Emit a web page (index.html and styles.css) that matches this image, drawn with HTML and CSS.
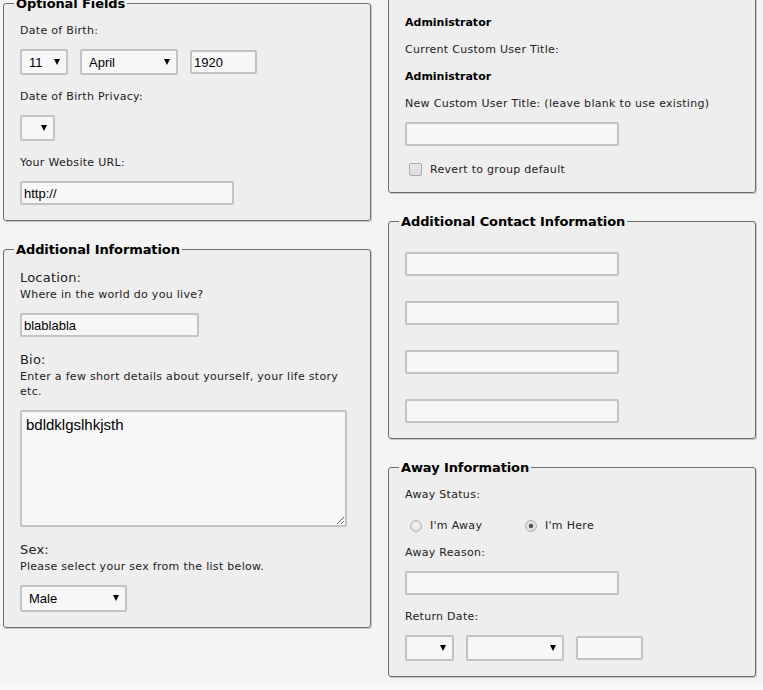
FILE: index.html
```html
<!DOCTYPE html>
<html>
<head>
<meta charset="utf-8">
<link rel="stylesheet" href="styles.css">
</head>
<body>
<div class="page">
  <div class="col col-left">
    <fieldset class="box">
      <legend>Optional Fields</legend>
      <div class="label">Date of Birth:</div>
      <div class="controls">
        <span class="sel"><select class="s-day"><option>11</option></select></span>
        <span class="sel"><select class="s-month"><option>April</option></select></span>
        <input class="txt t-year" type="text" value="1920">
      </div>
      <div class="label">Date of Birth Privacy:</div>
      <div class="controls">
        <span class="sel"><select class="s-priv"><option></option></select></span>
      </div>
      <div class="label">Your Website URL:</div>
      <div class="controls last">
        <input class="txt t-wide" type="text" value="http://">
      </div>
    </fieldset>

    <fieldset class="box box-gap">
      <legend>Additional Information</legend>
      <div class="label-group">
        <div class="title">Location:</div>
        <div class="desc">Where in the world do you live?</div>
      </div>
      <div class="controls">
        <input class="txt t-loc" type="text" value="blablabla">
      </div>
      <div class="label-group">
        <div class="title">Bio:</div>
        <div class="desc">Enter a few short details about yourself, your life story etc.</div>
      </div>
      <div class="controls">
        <textarea class="bio">bdldklgslhkjsth</textarea>
      </div>
      <div class="label-group">
        <div class="title">Sex:</div>
        <div class="desc">Please select your sex from the list below.</div>
      </div>
      <div class="controls last">
        <span class="sel"><select class="s-sex"><option>Male</option></select></span>
      </div>
    </fieldset>
  </div>

  <div class="col col-right">
    <fieldset class="box">
      <legend>Custom User Title</legend>
      <div class="label line">Default User Title:</div>
      <div class="value line">Administrator</div>
      <div class="label line">Current Custom User Title:</div>
      <div class="value line">Administrator</div>
      <div class="label">New Custom User Title: (leave blank to use existing)</div>
      <div class="controls">
        <input class="txt t-wide" type="text" value="">
      </div>
      <label class="check-row"><span class="checkbox"></span>Revert to group default</label>
    </fieldset>

    <fieldset class="box box-gap">
      <legend>Additional Contact Information</legend>
      <div class="contact-list">
        <input class="txt t-wide" type="text" value="">
        <input class="txt t-wide" type="text" value="">
        <input class="txt t-wide" type="text" value="">
        <input class="txt t-wide" type="text" value="">
      </div>
    </fieldset>

    <fieldset class="box box-gap">
      <legend>Away Information</legend>
      <div class="label">Away Status:</div>
      <div class="radio-row">
        <label class="radio-item"><span class="radio"></span>I'm Away</label>
        <label class="radio-item"><span class="radio checked"></span>I'm Here</label>
      </div>
      <div class="label">Away Reason:</div>
      <div class="controls"><input class="txt t-wide" type="text" value=""></div>
      <div class="label">Return Date:</div>
      <div class="controls last">
        <span class="sel"><select class="s-rday"><option></option></select></span>
        <span class="sel"><select class="s-month"><option></option></select></span>
        <input class="txt t-year" type="text" value="">
      </div>
    </fieldset>
  </div>
</div>
<div class="footer"></div>
</body>
</html>
```

FILE: styles.css
```css
html, body {
  margin: 0;
  padding: 0;
  background: #f4f4f4;
}

body {
  font-family: "DejaVu Sans", Verdana, sans-serif;
  font-size: 11px;
  letter-spacing: 0.3px;
  color: #222;
  overflow: hidden;
  height: 690px;
  position: relative;
}

.page {
  display: grid;
  grid-template-columns: 368px 368px;
  column-gap: 17px;
  padding-left: 3px;
  align-items: start;
}

.col-left {
  margin-top: -5px;
}

.col-right {
  margin-top: -40px;
}

.box {
  margin: 0;
  padding: 11px 16px 15px 16px;
  border: 1px solid #6d6d6d;
  border-radius: 3px;
  background: #eeeeee;
  box-shadow: 1px 1px 0 #c8c8c8;
  min-width: 0;
}

.box-gap {
  margin-top: 20px;
}

.box legend {
  margin-left: -6px;
  padding: 0 2px;
  font-size: 13px;
  line-height: 17px;
  font-weight: bold;
  letter-spacing: -0.1px;
  color: #000;
}

.label {
  line-height: 15px;
  margin-bottom: 11px;
}

.line {
  margin-bottom: 12px;
}

.value {
  font-weight: bold;
  letter-spacing: 0;
  color: #000;
  line-height: 15px;
}

.label-group {
  margin-bottom: 11px;
}

.title {
  font-size: 13px;
  line-height: 18px;
  letter-spacing: 0.2px;
  color: #222;
}

.desc {
  line-height: 15px;
}

.controls {
  display: flex;
  align-items: center;
  gap: 12px;
  margin-bottom: 14px;
}

.controls.last {
  margin-bottom: 0;
}

.contact-list {
  display: flex;
  flex-direction: column;
  align-items: flex-start;
  gap: 25px;
  padding-top: 11px;
}

.txt, select, textarea {
  box-sizing: border-box;
  font-family: "Liberation Sans", Arial, sans-serif;
  font-size: 13px;
  letter-spacing: 0;
  color: #000;
  background: #f7f7f7;
  border: 2px solid #c3c3c3;
  border-radius: 2px;
  outline: none;
  margin: 0;
}

.txt {
  height: 24px;
  padding: 0 2px;
}

.t-year { width: 67px; }
.t-wide { width: 214px; }
.t-loc { width: 179px; }

.sel {
  position: relative;
  display: inline-block;
}

.sel select {
  -webkit-appearance: none;
  appearance: none;
  height: 26px;
  padding: 0 0 0 7px;
  display: block;
}

.sel::after {
  content: "";
  position: absolute;
  right: 8px;
  top: 10px;
  border-left: 3.5px solid transparent;
  border-right: 3.5px solid transparent;
  border-top: 6px solid #000;
  pointer-events: none;
}

.s-day { width: 48px; }
.s-month { width: 98px; }
.s-priv { width: 35px; }
.sel .s-sex { width: 107px; height: 27px; }
.s-rday { width: 49px; }

.bio {
  width: 327px;
  height: 117px;
  padding: 4px 4px;
  font-size: 15px;
  resize: vertical;
  display: block;
}

.check-row {
  display: flex;
  align-items: center;
  line-height: 15px;
  margin-top: 16px;
}

.checkbox {
  width: 11px;
  height: 11px;
  border: 1px solid #a9a9a9;
  border-radius: 2px;
  background: linear-gradient(#e9e9e9, #dcdcdc);
  margin-left: 4px;
  margin-right: 8px;
}

.radio-row {
  display: flex;
  line-height: 15px;
  margin-top: 16px;
  margin-bottom: 12px;
}

.radio-item {
  display: flex;
  align-items: center;
  width: 115px;
}

.radio {
  box-sizing: border-box;
  width: 12px;
  height: 12px;
  border: 1px solid #b0b0b0;
  border-radius: 50%;
  background: radial-gradient(circle at 50% 40%, #f4f4f4, #dadada);
  margin-left: 5px;
  margin-right: 8px;
}

.radio.checked {
  background: radial-gradient(circle, #555 0, #555 2px, #e4e4e4 2.6px, #dadada 100%);
}

.footer {
  position: absolute;
  left: 0;
  right: 0;
  top: 684px;
  height: 6px;
  background: #f8f8f8;
}
```
